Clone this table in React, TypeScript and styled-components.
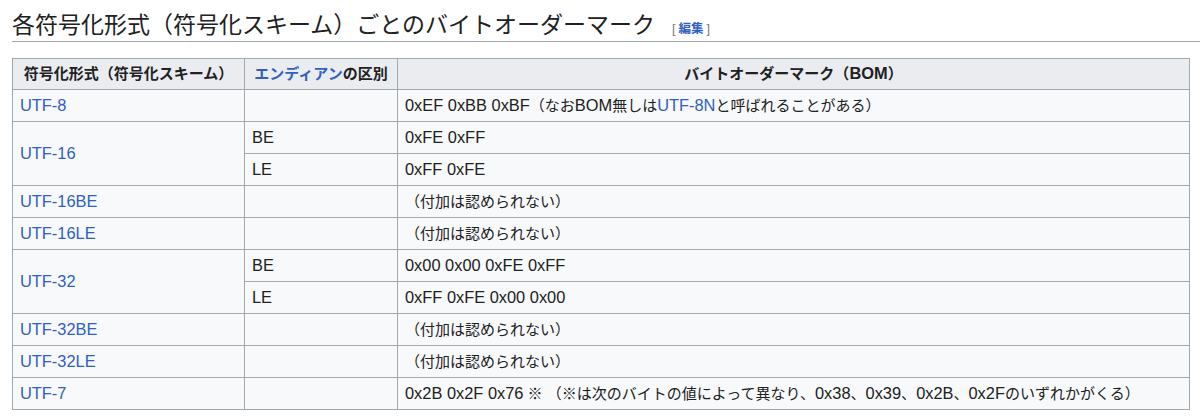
import React from 'react';
import styled, { createGlobalStyle } from 'styled-components';

const GlobalStyle = createGlobalStyle`
  html, body {
    margin: 0;
    padding: 0;
    background: #ffffff;
    color: #202122;
    font-family: 'Liberation Sans', 'Noto Sans CJK JP', sans-serif;
  }
`;

// --- Styled Components ---

const Page = styled.div`
  padding-left: 12px;
  width: 1188px;
`;

const Heading = styled.h2`
  margin: 10px 0 16px;
  padding: 0 0 1px;
  font-family: 'Liberation Sans', 'Noto Sans CJK JP', sans-serif;
  font-size: 23px;
  font-weight: 400;
  line-height: 30px;
  color: #202122;
  border-bottom: 1px solid #a2a9b1;
  white-space: nowrap;
`;

const EditSection = styled.span`
  margin-left: 14px;
  font-size: 12.5px;
  line-height: 1;
  vertical-align: 0;
`;

const Bracket = styled.span`
  color: #72777d;
  margin: 0 3px;
`;

const EditLink = styled.a`
  color: #3060c4;
  font-weight: 700;
  text-decoration: none;
`;

const Link = styled.a`
  color: #3060c4;
  text-decoration: none;
`;

// Latin runs come out wider than the CJK ones in the reference
const Latin = styled.span`
  font-size: 16.4px;
`;

const Table = styled.table`
  border-collapse: collapse;
  table-layout: fixed;
  width: 1177px;
  background: #f8f9fa;
  border: 1px solid #a2a9b1;
  font-size: 15px;
  color: #202122;
`;

const Th = styled.th`
  background: #eaecf0;
  border: 1px solid #a2a9b1;
  padding: 4px 7px 5px;
  line-height: 21px;
  font-weight: 700;
  text-align: center;
  white-space: nowrap;
`;

const Td = styled.td`
  border: 1px solid #a2a9b1;
  padding: 5px 7px;
  line-height: 21px;
  text-align: left;
  vertical-align: middle;
  white-space: nowrap;
`;

// split a string into ascii / non-ascii runs
const T: React.FC<{ children: string }> = ({ children }) => (
  <>
    {children.split(/([\x21-\x7e][\x20-\x7e]*[\x21-\x7e]|[\x21-\x7e])/).map((part, i) =>
      i % 2 === 1 ? <Latin key={i}>{part}</Latin> : part
    )}
  </>
);

interface Row {
  scheme: string;
  endian?: string;
  span?: number;
  bom: React.ReactNode;
}

const NONE = '（付加は認められない）';

const ROWS: Row[] = [
  {
    scheme: 'UTF-8',
    endian: '',
    bom: (
      <>
        <T>0xEF 0xBB 0xBF（なおBOM無しは</T>
        <Link href="#">
          <T>UTF-8N</T>
        </Link>
        と呼ばれることがある）
      </>
    ),
  },
  { scheme: 'UTF-16', endian: 'BE', span: 2, bom: <T>0xFE 0xFF</T> },
  { scheme: '', endian: 'LE', bom: <T>0xFF 0xFE</T> },
  { scheme: 'UTF-16BE', endian: '', bom: NONE },
  { scheme: 'UTF-16LE', endian: '', bom: NONE },
  { scheme: 'UTF-32', endian: 'BE', span: 2, bom: <T>0x00 0x00 0xFE 0xFF</T> },
  { scheme: '', endian: 'LE', bom: <T>0xFF 0xFE 0x00 0x00</T> },
  { scheme: 'UTF-32BE', endian: '', bom: NONE },
  { scheme: 'UTF-32LE', endian: '', bom: NONE },
  {
    scheme: 'UTF-7',
    endian: '',
    bom: <T>0x2B 0x2F 0x76 ※ （※は次のバイトの値によって異なり、0x38、0x39、0x2B、0x2Fのいずれかがくる）</T>,
  },
];

const App: React.FC = () => {
  return (
    <Page>
      <GlobalStyle />
      <Heading>
        各符号化形式（符号化スキーム）ごとのバイトオーダーマーク
        <EditSection>
          <Bracket>[</Bracket>
          <EditLink href="#">編集</EditLink>
          <Bracket>]</Bracket>
        </EditSection>
      </Heading>

      <Table>
        <colgroup>
          <col style={{ width: 232 }} />
          <col style={{ width: 153 }} />
          <col style={{ width: 792 }} />
        </colgroup>
        <thead>
          <tr>
            <Th>符号化形式（符号化スキーム）</Th>
            <Th>
              <Link href="#">エンディアン</Link>の区別
            </Th>
            <Th>
              <T>バイトオーダーマーク（BOM）</T>
            </Th>
          </tr>
        </thead>
        <tbody>
          {ROWS.map((row, idx) => (
            <tr key={idx}>
              {row.scheme && (
                <Td rowSpan={row.span || 1}>
                  <Link href="#">
                    <T>{row.scheme}</T>
                  </Link>
                </Td>
              )}
              <Td>{row.endian ? <T>{row.endian}</T> : null}</Td>
              <Td>{row.bom}</Td>
            </tr>
          ))}
        </tbody>
      </Table>
    </Page>
  );
};

export default App;
